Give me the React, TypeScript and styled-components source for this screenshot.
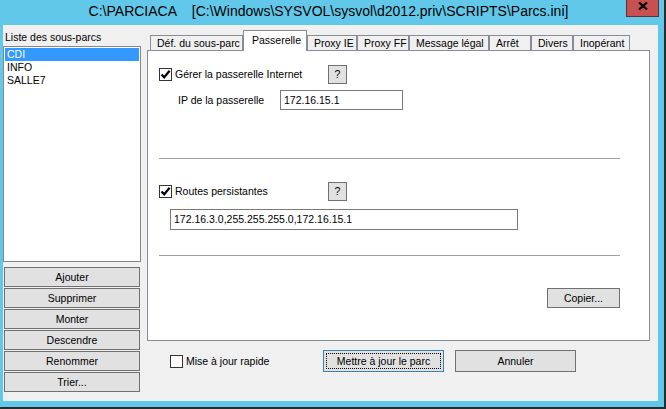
import React from 'react';
import styled, { createGlobalStyle } from 'styled-components';

const GlobalStyle = createGlobalStyle`
  html, body {
    margin: 0;
    padding: 0;
    background: #2b2b2b;
  }
  body {
    width: 666px;
    height: 409px;
    overflow: hidden;
    font-family: "Liberation Sans", Arial, sans-serif;
    font-size: 10.5px;
    color: #000;
  }
`;

const Window = styled.div`
  width: 664px;
  height: 407px;
  box-sizing: border-box;
  background: #62c8ea;
  padding: 0 6px 6px 3px;
  display: flex;
  flex-direction: column;
`;

const TitleBar = styled.div`
  height: 25px;
  margin: 0 -6px 0 -3px;
  display: grid;
  grid-template-columns: 1fr auto 1fr;
  align-items: start;
`;

const TitleText = styled.div`
  grid-column: 2;
  font-family: "Liberation Sans", Arial, sans-serif;
  font-size: 14px;
  line-height: 23px;
  white-space: pre;
  color: #000;
  margin-right: 7px;
`;

const CloseButton = styled.div`
  grid-column: 3;
  justify-self: end;
  width: 33px;
  height: 17px;
  box-sizing: border-box;
  margin-right: 5px;
  background: #c75050;
  border: 1px solid #5c3333;
  border-top: none;
  display: flex;
  justify-content: center;
  padding-top: 2px;
`;

const Client = styled.div`
  flex: 1;
  background: #f0f0f0;
  display: flex;
  align-items: flex-start;
`;

const LeftColumn = styled.div`
  width: 138px;
  display: flex;
  flex-direction: column;
`;

const ListLabel = styled.div`
  height: 21px;
  box-sizing: border-box;
  padding: 6px 0 0 2px;
  line-height: 13px;
`;

const ListBox = styled.div`
  height: 216px;
  box-sizing: border-box;
  background: #fff;
  border: 1px solid #828790;
  padding: 1px;
`;

const ListItem = styled.div<{ $selected?: boolean }>`
  height: 13px;
  line-height: 13px;
  padding-left: 2px;
  background: ${p => (p.$selected ? '#3399ff' : 'transparent')};
  color: ${p => (p.$selected ? '#fff' : '#000')};
`;

const ButtonStack = styled.div`
  margin: 5px 1px 0;
  display: flex;
  flex-direction: column;
  gap: 1px;
`;

const Button = styled.div<{ $w?: number; $h?: number; $focused?: boolean }>`
  width: ${p => (p.$w ? `${p.$w}px` : 'auto')};
  height: ${p => p.$h ?? 20}px;
  box-sizing: border-box;
  background: #e1e1e1;
  border: 1px solid ${p => (p.$focused ? '#3c7fb1' : '#707070')};
  display: flex;
  align-items: center;
  justify-content: center;
  padding: ${p => (p.$focused ? '2px' : '0')};
  line-height: 13px;
`;

const FocusRing = styled.div`
  flex: 1;
  align-self: stretch;
  outline: 1px dotted #000;
  outline-offset: -1px;
  display: flex;
  align-items: center;
  justify-content: center;
`;

const RightColumn = styled.div`
  margin: 5px 0 0 6px;
  display: flex;
  flex-direction: column;
`;

const TabStrip = styled.div`
  height: 21px;
  display: flex;
  align-items: flex-end;
  padding-left: 3px;
  margin-bottom: -1px;
  position: relative;
  z-index: 1;
`;

const Tab = styled.div<{ $w: number; $active?: boolean }>`
  width: ${p => p.$w}px;
  height: ${p => (p.$active ? 21 : 16)}px;
  box-sizing: border-box;
  border: 1px solid #898c95;
  border-bottom: ${p => (p.$active ? 'none' : '1px solid #898c95')};
  background: ${p => (p.$active ? '#fff' : '#f0f0f0')};
  padding: ${p => (p.$active ? '3px 0 0 8px' : '1px 0 0 6px')};
  line-height: 13px;
  white-space: nowrap;
`;

const Panel = styled.div`
  width: 503px;
  height: 291px;
  box-sizing: border-box;
  background: #fff;
  border: 1px solid #898c95;
  padding: 14px 29px 0 11px;
  display: flex;
  flex-direction: column;
`;

const OptionRow = styled.div<{ $top: number }>`
  margin-top: ${p => p.$top}px;
  height: 19px;
  display: grid;
  grid-template-columns: 169px 19px;
  align-items: center;
`;

const CheckLine = styled.label`
  display: flex;
  align-items: center;
  gap: 3px;
  line-height: 13px;
`;

const Box = styled.span`
  width: 13px;
  height: 13px;
  box-sizing: border-box;
  border: 1px solid #333;
  background: #fff;
  display: inline-flex;
  align-items: center;
  justify-content: center;
`;

const FieldRow = styled.div`
  margin-top: 6px;
  padding-left: 19px;
  display: grid;
  grid-template-columns: 102px 123px;
  align-items: center;
`;

const TextInput = styled.div<{ $w?: number; $h: number; $left?: number; $top?: number }>`
  width: ${p => (p.$w ? `${p.$w}px` : 'auto')};
  height: ${p => p.$h}px;
  margin: ${p => p.$top ?? 0}px 0 0 ${p => p.$left ?? 0}px;
  box-sizing: border-box;
  border: 1px solid #7a7a7a;
  background: #fff;
  padding: 0 3px;
  display: flex;
  align-items: center;
  line-height: 13px;
  white-space: nowrap;
`;

const Separator = styled.div<{ $top: number }>`
  margin-top: ${p => p.$top}px;
  height: 1px;
  background: #a0a0a0;
`;

const ActionRow = styled.div`
  margin-top: 32px;
  display: flex;
  justify-content: flex-end;
`;

const BottomRow = styled.div`
  margin-top: 9px;
  height: 22px;
  padding-left: 23px;
  display: grid;
  grid-template-columns: 142px 121px 121px;
  column-gap: 11px;
  align-items: center;
`;

const Check = ({ checked }: { checked?: boolean }) => (
  <Box>
    {checked && (
      <svg width="11" height="11" viewBox="0 0 11 11">
        <polyline points="1.5,5.5 4.2,8.3 9.6,1.8" fill="none" stroke="#000" strokeWidth="2.2" />
      </svg>
    )}
  </Box>
);

const tabs = [
  { label: 'Déf. du sous-parc', w: 93 },
  { label: 'Passerelle', w: 64, active: true },
  { label: 'Proxy IE', w: 50 },
  { label: 'Proxy FF', w: 52 },
  { label: 'Message légal', w: 80 },
  { label: 'Arrêt', w: 42 },
  { label: 'Divers', w: 42 },
  { label: 'Inopérant', w: 57 },
];

const sideButtons = ['Ajouter', 'Supprimer', 'Monter', 'Descendre', 'Renommer', 'Trier...'];

export default function App() {
  return (
    <>
      <GlobalStyle />
      <Window>
        <TitleBar>
          <TitleText>{'C:\\PARCIACA    [C:\\Windows\\SYSVOL\\sysvol\\d2012.priv\\SCRIPTS\\Parcs.ini]'}</TitleText>
          <CloseButton>
            <svg width="10" height="8" viewBox="0 0 10 8">
              <path d="M1 0.5 L9 7.5 M9 0.5 L1 7.5" stroke="#000" strokeWidth="2.2" />
            </svg>
          </CloseButton>
        </TitleBar>
        <Client>
          <LeftColumn>
            <ListLabel>Liste des sous-parcs</ListLabel>
            <ListBox>
              <ListItem $selected>CDI</ListItem>
              <ListItem>INFO</ListItem>
              <ListItem>SALLE7</ListItem>
            </ListBox>
            <ButtonStack>
              {sideButtons.map(b => (
                <Button key={b}>{b}</Button>
              ))}
            </ButtonStack>
          </LeftColumn>
          <RightColumn>
            <TabStrip>
              {tabs.map(t => (
                <Tab key={t.label} $w={t.w} $active={t.active}>
                  {t.label}
                </Tab>
              ))}
            </TabStrip>
            <Panel>
              <OptionRow $top={0}>
                <CheckLine>
                  <Check checked />
                  Gérer la passerelle Internet
                </CheckLine>
                <Button $w={19} $h={19}>?</Button>
              </OptionRow>
              <FieldRow>
                <span>IP de la passerelle</span>
                <TextInput $h={20}>172.16.15.1</TextInput>
              </FieldRow>
              <Separator $top={48} />
              <OptionRow $top={23}>
                <CheckLine>
                  <Check checked />
                  Routes persistantes
                </CheckLine>
                <Button $w={19} $h={19}>?</Button>
              </OptionRow>
              <TextInput $w={348} $h={21} $left={11} $top={8}>
                172.16.3.0,255.255.255.0,172.16.15.1
              </TextInput>
              <Separator $top={25} />
              <ActionRow>
                <Button $w={73} $h={20}>Copier...</Button>
              </ActionRow>
            </Panel>
            <BottomRow>
              <CheckLine>
                <Check />
                Mise à jour rapide
              </CheckLine>
              <Button $h={22} $focused>
                <FocusRing>Mettre à jour le parc</FocusRing>
              </Button>
              <Button $h={22}>Annuler</Button>
            </BottomRow>
          </RightColumn>
        </Client>
      </Window>
    </>
  );
}
